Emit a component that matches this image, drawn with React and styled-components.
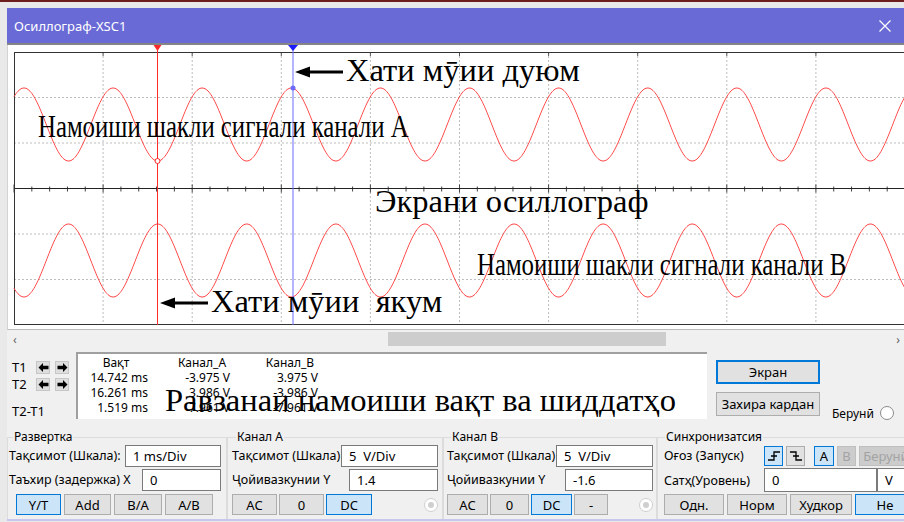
import React from 'react';
import styled, { createGlobalStyle } from 'styled-components';

const GlobalStyle = createGlobalStyle`
  html, body {
    margin: 0;
    padding: 0;
    overflow: hidden;
    background: #e9e9e9;
  }
  body {
    font-family: "Noto Sans", "Liberation Sans", sans-serif;
    font-size: 12px;
    color: #000;
  }
`;

// plot geometry
const PLOT_W = 891;
const PLOT_H = 273;
const DX = 89.1;
const DY = 45.5;
const AMP = 36.5;
const CURSOR_1 = 143.5;
const CURSOR_2 = 279;

function wavePath(center, sign) {
  const pts = [];
  for (let x = 0; x <= PLOT_W; x += 1) {
    const y = center - sign * AMP * Math.cos((2 * Math.PI * (x - 10)) / DX);
    pts.push(`${x},${y.toFixed(2)}`);
  }
  return 'M' + pts.join(' L');
}

const Desktop = styled.div`
  width: 904px;
  height: 522px;
  box-sizing: border-box;
  border-top: 2px solid #6e1d1d;
  padding: 6px 0 0 7px;
  overflow: hidden;
`;

const Window = styled.div`
  width: 897px;
  display: flex;
  flex-direction: column;
  background: #f0f0f0;
  border-bottom: 2px solid #c6c6ef;
  overflow: hidden;
`;

const TitleBar = styled.div`
  height: 35px;
  display: flex;
  align-items: center;
  justify-content: space-between;
  padding: 0 13px 0 7px;
  background: #6a6ad6;
  border-bottom: 2px solid #858585;
  color: #fff;
  font-size: 13px;
`;

const Screen = styled.div`
  position: relative;
  height: 285px;
  box-sizing: border-box;
  padding: 7px 0 0 6px;
  background: #fff;
  border-left: 1px solid #d4d4d4;
  border-bottom: 1px solid #bdbdbd;
  overflow: hidden;
`;

const Plot = styled.svg`
  display: block;
  overflow: visible;
`;

const Note = styled.div`
  position: absolute;
  left: ${(p) => p.$x}px;
  top: ${(p) => p.$y}px;
  display: flex;
  align-items: center;
  gap: 3px;
  font-family: "Liberation Serif", "Times New Roman", serif;
  font-size: ${(p) => p.$size || 32}px;
  line-height: 1;
  white-space: pre;
  transform: scaleX(${(p) => p.$squeeze || 1});
  transform-origin: left center;
  pointer-events: none;
`;

const NoteArrow = styled.svg`
  margin-top: 4px;
  flex: none;
`;

const ScrollBar = styled.div`
  height: 18px;
  display: flex;
  align-items: center;
  padding: 0 4px 0 6px;
  color: #606060;
  font-size: 12px;
`;

const Thumb = styled.div`
  width: 278px;
  height: 14px;
  margin-left: 371px;
  background: #cdcdcd;
`;

const ScrollEnd = styled.span`
  margin-left: auto;
`;

const MeasureRow = styled.div`
  position: relative;
  height: 76px;
  display: flex;
  align-items: flex-start;
`;

const CursorPanel = styled.div`
  width: 69px;
  padding: 12px 0 0 5px;
  box-sizing: border-box;
  display: flex;
  flex-direction: column;
  gap: 3px;
  font-size: 13px;
`;

const CursorLine = styled.div`
  height: 14px;
  display: flex;
  align-items: center;
  gap: 5px;
`;

const CursorLabel = styled.span`
  width: 19px;
`;

const StepBtn = styled.div`
  width: 14px;
  height: 13px;
  display: flex;
  align-items: center;
  justify-content: center;
  background: #dedede;
  border: 1px solid #c6c6c6;
  box-sizing: border-box;
`;

const DiffLabel = styled.div`
  margin-top: 8px;
`;

const Readout = styled.div`
  width: 631px;
  height: 67px;
  margin-top: 4px;
  box-sizing: border-box;
  display: flex;
  background: #fff;
  border-top: 2px solid #a0a0a0;
  border-left: 2px solid #a0a0a0;
  padding-top: 1px;
  line-height: 15px;
`;

const Column = styled.div`
  width: ${(p) => p.$w}px;
  margin-left: ${(p) => p.$ml}px;
  display: flex;
  flex-direction: column;
  align-items: flex-end;
  white-space: nowrap;
`;

const ColHead = styled.span`
  align-self: center;
`;

const SideButtons = styled.div`
  margin: 12px 0 0 9px;
  display: flex;
  flex-direction: column;
  gap: 8px;
`;

const ExternalRow = styled.div`
  align-self: flex-end;
  margin: 0 0 2px 12px;
  height: 18px;
  display: flex;
  align-items: center;
  gap: 6px;
`;

const Radio = styled.span`
  width: 14px;
  height: 14px;
  box-sizing: border-box;
  border-radius: 50%;
  border: 1px solid ${(p) => (p.$disabled ? '#cfcfcf' : '#8a8a8a')};
  background: #fff;
  display: flex;
  align-items: center;
  justify-content: center;
  flex: none;
  &::after {
    content: '';
    width: 6px;
    height: 6px;
    border-radius: 50%;
    background: ${(p) => (p.$disabled ? '#cfcfcf' : 'transparent')};
  }
`;

const Btn = styled.button`
  width: ${(p) => p.$w}px;
  height: ${(p) => p.$h || 21}px;
  padding: 0;
  box-sizing: border-box;
  font-family: inherit;
  font-size: 13px;
  color: ${(p) => (p.$disabled ? '#a3a3a3' : '#000')};
  background: ${(p) => (p.$active ? '#cce4f7' : p.$disabled ? '#cccccc' : '#e1e1e1')};
  border: ${(p) => (p.$focus ? 2 : 1)}px solid
    ${(p) => (p.$active || p.$focus ? '#0078d7' : p.$disabled ? '#bfbfbf' : '#adadad')};
  display: flex;
  align-items: center;
  justify-content: center;
  flex: none;
  white-space: nowrap;
  overflow: hidden;
`;

const Controls = styled.div`
  height: 95px;
  box-sizing: border-box;
  padding-top: 6px;
  display: flex;
`;

const Group = styled.fieldset`
  width: ${(p) => p.$w}px;
  margin: 0;
  padding: 0 ${(p) => p.$pr}px 0 ${(p) => p.$pl}px;
  box-sizing: border-box;
  border: 1px solid #dcdcdc;
  border-bottom: none;
  min-width: 0;
  flex: none;
`;

const Legend = styled.legend`
  padding: 0 1px;
  margin-left: ${(p) => p.$ml ?? 4}px;
  font-size: 12px;
  line-height: 14px;
`;

const Row = styled.div`
  height: ${(p) => p.$h || 23}px;
  margin-top: ${(p) => p.$mt || 0}px;
  display: flex;
  align-items: center;
  gap: ${(p) => p.$gap || 0}px;
  white-space: nowrap;
`;

// a fixed-width label keeps the controls after it in place; otherwise the
// label takes the free space and pushes its field to the right edge
const Label = styled.span`
  width: ${(p) => (p.$w ? `${p.$w}px` : 'auto')};
  margin-right: ${(p) => (p.$w ? '0' : 'auto')};
  font-size: 12.5px;
  flex: none;
`;

const Field = styled.div`
  width: ${(p) => p.$w}px;
  height: ${(p) => p.$h || 22}px;
  box-sizing: border-box;
  padding-left: 7px;
  display: flex;
  align-items: center;
  background: #fff;
  border: 1px solid #7a7a7a;
  font-size: 13px;
  white-space: pre;
  flex: none;
`;

const Gap = styled.span`
  width: ${(p) => p.$w}px;
  flex: none;
`;

const Spacer = styled.span`
  margin-left: auto;
  margin-right: ${(p) => p.$mr}px;
`;

const ArrowIcon = ({ dir }) => (
  <svg width="11" height="11" viewBox="0 0 11 11">
    <path
      d="M0.5 5.5 L5 1 L5 3.8 L10.5 3.8 L10.5 7.2 L5 7.2 L5 10 Z"
      fill="#000"
      transform={dir === 'right' ? 'translate(11 0) scale(-1 1)' : undefined}
    />
  </svg>
);

const EdgeIcon = ({ falling }) => (
  <svg width="14" height="14" viewBox="0 0 14 14" fill="none" stroke="#000" strokeWidth="1.3">
    {falling ? (
      <path d="M1 3 H7 V11 H13 M4 7 H10" />
    ) : (
      <path d="M1 11 H7 V3 H13 M4 7 H10" />
    )}
  </svg>
);

const LongArrow = () => (
  <NoteArrow width="48" height="12" viewBox="0 0 48 12">
    <path d="M0 6 L15 0.5 L15 4.5 L48 4.5 L48 7.5 L15 7.5 L15 11.5 Z" fill="#000" />
  </NoteArrow>
);

function Oscillogram() {
  const hLines = [1, 2, 4, 5].map((i) => i * DY);
  const vLines = Array.from({ length: 10 }, (_, i) => (i + 1) * DX);
  const minor = Array.from({ length: 50 }, (_, i) => i * (DX / 5));
  const axisY = 3 * DY;

  return (
    <Plot width={PLOT_W} height={PLOT_H}>
      {vLines.map((x) => (
        <line key={`v${x}`} x1={x} y1={0} x2={x} y2={PLOT_H} stroke="#bdbdbd" strokeDasharray="2 2" />
      ))}
      {hLines.map((y) => (
        <line key={`h${y}`} x1={0} y1={y} x2={PLOT_W} y2={y} stroke="#bdbdbd" strokeDasharray="2 2" />
      ))}
      {vLines.map((x) => (
        <line key={`t${x}`} x1={x} y1={0} x2={x} y2={4} stroke="#555" />
      ))}
      {minor.map((x, i) => (
        <line
          key={`m${i}`}
          x1={x}
          y1={axisY - (i % 5 === 0 ? 4 : 2)}
          x2={x}
          y2={axisY + (i % 5 === 0 ? 4 : 3)}
          stroke="#444"
        />
      ))}
      <line x1={0} y1={axisY} x2={PLOT_W} y2={axisY} stroke="#222" />
      <rect x={0.5} y={0.5} width={PLOT_W} height={PLOT_H - 1} fill="none" stroke="#333" />

      <path d={wavePath(72.5, 1)} fill="none" stroke="#ff4848" strokeWidth="1" />
      <path d={wavePath(208.5, -1)} fill="none" stroke="#ff4848" strokeWidth="1" />

      <line x1={CURSOR_1} y1={-6} x2={CURSOR_1} y2={PLOT_H} stroke="#ff2a2a" />
      <line x1={CURSOR_2} y1={-6} x2={CURSOR_2} y2={PLOT_H} stroke="#6b6bff" />
      <polygon points={`${CURSOR_1 - 4},-7 ${CURSOR_1 + 4},-7 ${CURSOR_1},-1`} fill="#ff2a2a" />
      <polygon points={`${CURSOR_2 - 5},-7 ${CURSOR_2 + 5},-7 ${CURSOR_2},-1`} fill="#1d1dff" />
      <circle cx={CURSOR_1} cy={109} r={2.5} fill="#fff" stroke="#ff2a2a" />
      <circle cx={CURSOR_2} cy={36} r={2.5} fill="#6b6bff" />
    </Plot>
  );
}

export default function App() {
  return (
    <>
      <GlobalStyle />
      <Desktop>
        <Window>
          <TitleBar>
            <span>Осиллограф-XSC1</span>
            <svg width="12" height="12" viewBox="0 0 12 12" stroke="#fff" strokeWidth="1.2">
              <path d="M0.5 0.5 L11.5 11.5 M11.5 0.5 L0.5 11.5" />
            </svg>
          </TitleBar>

          <Screen>
            <Oscillogram />
            <Note $x={287} $y={9} $size={32.5}>
              <LongArrow />
              <span>Хати мӯии дуюм</span>
            </Note>
            <Note $x={30} $y={65} $squeeze={0.775}>
              Намоиши шакли сигнали канали А
            </Note>
            <Note $x={367} $y={140} $size={32.5}>
              Экрани осиллограф
            </Note>
            <Note $x={469} $y={203} $squeeze={0.775}>
              Намоиши шакли сигнали канали В
            </Note>
            <Note $x={152} $y={240} $size={32.5}>
              <LongArrow />
              <span>Хати мӯии  якум</span>
            </Note>
          </Screen>

          <ScrollBar>
            <span>‹</span>
            <Thumb />
            <ScrollEnd>›</ScrollEnd>
          </ScrollBar>

          <MeasureRow>
            <CursorPanel>
              <CursorLine>
                <CursorLabel>T1</CursorLabel>
                <StepBtn><ArrowIcon dir="left" /></StepBtn>
                <StepBtn><ArrowIcon dir="right" /></StepBtn>
              </CursorLine>
              <CursorLine>
                <CursorLabel>T2</CursorLabel>
                <StepBtn><ArrowIcon dir="left" /></StepBtn>
                <StepBtn><ArrowIcon dir="right" /></StepBtn>
              </CursorLine>
              <DiffLabel>T2-T1</DiffLabel>
            </CursorPanel>

            <Readout>
              <Column $w={64} $ml={6}>
                <ColHead>Вақт</ColHead>
                <span>14.742 ms</span>
                <span>16.261 ms</span>
                <span>1.519 ms</span>
              </Column>
              <Column $w={56} $ml={26}>
                <ColHead>Канал_А</ColHead>
                <span>-3.975 V</span>
                <span>3.986 V</span>
                <span>7.961 V</span>
              </Column>
              <Column $w={56} $ml={32}>
                <ColHead>Канал_В</ColHead>
                <span>3.975 V</span>
                <span>-3.986 V</span>
                <span>-7.961 V</span>
              </Column>
            </Readout>

            <SideButtons>
              <Btn $w={104} $h={24} $focus>Экран</Btn>
              <Btn $w={104} $h={24}>Захира кардан</Btn>
            </SideButtons>

            <ExternalRow>
              <span>Берунӣ</span>
              <Radio />
            </ExternalRow>

            <Note $x={158} $y={36} $size={32.6}>
              Равзанаи намоиши вақт ва шиддатҳо
            </Note>
          </MeasureRow>

          <Controls>
            <Group $w={220} $pl={1} $pr={5}>
              <Legend>Развертка</Legend>
              <Row>
                <Label>Тақсимот (Шкала):</Label>
                <Field $w={96}>1 ms/Div</Field>
              </Row>
              <Row $mt={1}>
                <Label>Таъхир (задержка) X</Label>
                <Field $w={79}>0</Field>
              </Row>
              <Row $mt={3} $h={21} $gap={3}>
                <Gap $w={4} />
                <Btn $w={45} $active>Y/T</Btn>
                <Btn $w={47}>Add</Btn>
                <Btn $w={48}>B/A</Btn>
                <Btn $w={48}>A/B</Btn>
              </Row>
            </Group>

            <Group $w={216} $pl={4} $pr={4}>
              <Legend>Канал А</Legend>
              <Row>
                <Label>Тақсимот (Шкала)</Label>
                <Field $w={97}>5  V/Div</Field>
              </Row>
              <Row $mt={1}>
                <Label>Ҷойивазкунии Y</Label>
                <Field $w={89}>1.4</Field>
              </Row>
              <Row $mt={3} $h={21} $gap={2}>
                <Btn $w={45}>AC</Btn>
                <Btn $w={45}>0</Btn>
                <Btn $w={46} $active>DC</Btn>
                <Spacer $mr={5} />
                <Radio $disabled />
              </Row>
            </Group>

            <Group $w={214} $pl={3} $pr={3}>
              <Legend>Канал В</Legend>
              <Row>
                <Label>Тақсимот (Шкала)</Label>
                <Field $w={97}>5  V/Div</Field>
              </Row>
              <Row $mt={1}>
                <Label>Ҷойивазкунии Y</Label>
                <Field $w={88}>-1.6</Field>
              </Row>
              <Row $mt={3} $h={21} $gap={2}>
                <Btn $w={41}>AC</Btn>
                <Btn $w={39}>0</Btn>
                <Btn $w={41} $active>DC</Btn>
                <Btn $w={34}>-</Btn>
                <Spacer $mr={5} />
                <Radio $disabled />
              </Row>
            </Group>

            <Group $w={260} $pl={6} $pr={0}>
              <Legend $ml={1}>Синхронизатсия</Legend>
              <Row $gap={3}>
                <Label $w={97}>Оғоз (Запуск)</Label>
                <Btn $w={19} $h={20} $active><EdgeIcon /></Btn>
                <Btn $w={19} $h={20}><EdgeIcon falling /></Btn>
                <Gap $w={3} />
                <Btn $w={20} $h={20} $active>A</Btn>
                <Btn $w={19} $h={20} $disabled>B</Btn>
                <Btn $w={54} $h={20} $disabled>Берунӣ</Btn>
              </Row>
              <Row $mt={1} $h={24}>
                <Label $w={100}>Сатҳ(Уровень)</Label>
                <Field $w={113} $h={24}>0</Field>
                <Field $w={40} $h={24}>V</Field>
              </Row>
              <Row $mt={2} $h={21} $gap={3}>
                <Btn $w={60}>Одн.</Btn>
                <Btn $w={60}>Норм</Btn>
                <Btn $w={62}>Худкор</Btn>
                <Btn $w={60} $active>Не</Btn>
              </Row>
            </Group>
          </Controls>
        </Window>
      </Desktop>
    </>
  );
}
